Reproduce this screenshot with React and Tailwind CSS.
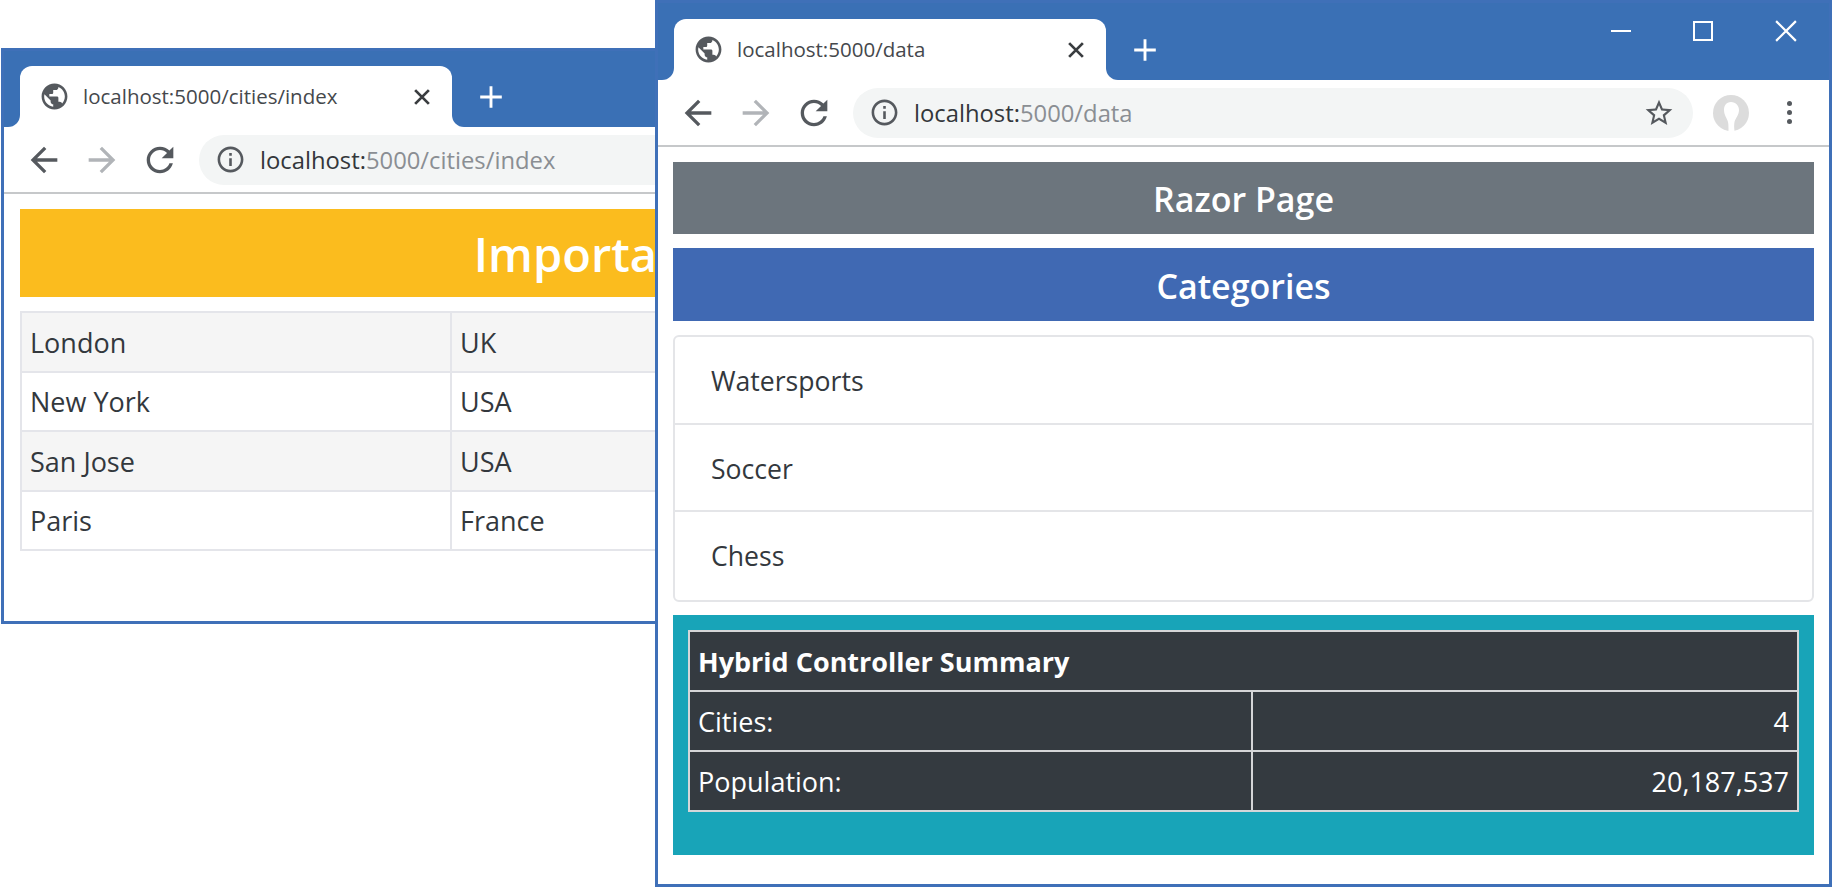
import React from 'react';

const paths = {
  back: 'M20 11H7.83l5.59-5.59L12 4l-8 8 8 8 1.41-1.41L7.83 13H20v-2z',
  forward: 'M12 4l-1.41 1.41L16.17 11H4v2h12.17l-5.58 5.59L12 20l8-8z',
  reload: 'M17.65 6.35C16.2 4.9 14.21 4 12 4c-4.42 0-7.99 3.58-7.99 8s3.57 8 7.99 8c3.73 0 6.84-2.55 7.73-6h-2.08c-.82 2.33-3.04 4-5.65 4-3.31 0-6-2.69-6-6s2.69-6 6-6c1.66 0 3.14.69 4.22 1.78L13 11h7V4l-2.35 2.35z',
  info: 'M11 7h2v2h-2zm0 4h2v6h-2zm1-9C6.48 2 2 6.48 2 12s4.48 10 10 10 10-4.48 10-10S17.52 2 12 2zm0 18c-4.41 0-8-3.59-8-8s3.59-8 8-8 8 3.59 8 8-3.59 8-8 8z',
  star: 'M22 9.24l-7.19-.62L12 2 9.19 8.63 2 9.24l5.46 4.73L5.82 21 12 17.27 18.18 21l-1.63-7.03L22 9.24zM12 15.4l-3.76 2.27 1-4.28-3.32-2.88 4.38-.38L12 6.1l1.71 4.04 4.38.38-3.32 2.88 1 4.28L12 15.4z',
  globe: 'M12 2C6.48 2 2 6.48 2 12s4.48 10 10 10 10-4.48 10-10S17.52 2 12 2zm-1 17.93c-3.95-.49-7-3.85-7-7.93 0-.62.08-1.21.21-1.79L9 15v1c0 1.1.9 2 2 2v1.93zm6.9-2.54c-.26-.81-1-1.39-1.9-1.39h-1v-3c0-.55-.45-1-1-1H8v-2h2c.55 0 1-.45 1-1V7h2c1.1 0 2-.9 2-2v-.41c2.93 1.19 5 4.06 5 7.41 0 2.08-.8 3.97-2.1 5.39z',
};

const Icon = ({ name, className }) => (
  <svg viewBox="0 0 24 24" fill="currentColor" className={className}>
    <path d={paths[name]} />
  </svg>
);

const TabStrip = ({ title, topClass, controls }) => (
  <div className="flex flex-col bg-white">
    <div className={`${topClass} bg-[#3a70b5]`} />
    <div className="flex h-[61px]">
      <div className="w-[16px] bg-[#3a70b5] rounded-br-[12px]" />
      <div className="bg-[#3a70b5]">
        <div className="w-[432px] h-full bg-white rounded-t-[12px] flex items-center pl-[20px] pr-[20px]">
          <Icon name="globe" className="w-[31px] h-[31px] text-[#55595e] -ml-[1px]" />
          <span className="ml-[13px] flex-1 text-[20.5px] text-[#45484c]">{title}</span>
          <svg viewBox="0 0 16 16" className="w-[20px] h-[20px] text-[#3a3d40]" fill="none" stroke="currentColor" strokeWidth="2.2">
            <path d="M2.5 2.5l11 11M13.5 2.5l-11 11" />
          </svg>
        </div>
      </div>
      <div className="flex-1 bg-[#3a70b5] rounded-bl-[12px] flex items-center pl-[27px] relative">
        <svg viewBox="0 0 20 20" className="w-[24px] h-[24px] text-white" fill="none" stroke="currentColor" strokeWidth="2.4">
          <path d="M10 1v18M1 10h18" />
        </svg>
        {controls}
      </div>
    </div>
  </div>
);

const Toolbar = ({ host, path, wide }) => (
  <div className="h-[67px] bg-white border-b-2 border-[#c6c8ca] flex items-center pl-[20px] pr-[37px]">
    <Icon name="back" className="w-[40px] h-[40px] text-[#55595e]" />
    <Icon name="forward" className="w-[40px] h-[40px] text-[#b1b4b8] ml-[18px]" />
    <Icon name="reload" className="w-[40px] h-[40px] text-[#55595e] ml-[18px]" />
    <div className="flex-1 ml-[19px] h-[50px] rounded-full bg-[#f3f5f5] flex items-center pl-[16px] pr-[18px]">
      <Icon name="info" className="w-[31px] h-[31px] text-[#55595e]" />
      <span className="ml-[14px] pt-[2px] flex-1 text-[23.8px] text-[#8a8e93]">
        <span className="text-[#33373b]">{host}</span>{path}
      </span>
      {wide && <Icon name="star" className="w-[32px] h-[32px] text-[#55595e]" />}
    </div>
    {wide && (
      <>
        <svg viewBox="0 0 36 36" className="ml-[20px] w-[36px] h-[36px]">
          <circle cx="18" cy="18" r="18" fill="#dcdcdc" />
          <path d="M18 7c-5 0-7 4-7 8 0 5 3 8 4 12 .5 2 .5 5 .5 9h6c-.5-4-.5-6 0-9 1-4 4.500-7 4.500-12 0-4-3-8-8-8z" fill="#fff" />
        </svg>
        <div className="ml-[38px] flex flex-col gap-[4px]">
          <div className="w-[5px] h-[5px] rounded-full bg-[#55595e]" />
          <div className="w-[5px] h-[5px] rounded-full bg-[#55595e]" />
          <div className="w-[5px] h-[5px] rounded-full bg-[#55595e]" />
        </div>
      </>
    )}
  </div>
);

const cityRows = [
  ['London', 'UK'],
  ['New York', 'USA'],
  ['San Jose', 'USA'],
  ['Paris', 'France'],
];

const categories = ['Watersports', 'Soccer', 'Chess'];

const WindowControls = () => (
  <div className="absolute right-[32px] top-[1px] flex items-center gap-[62px] text-white">
    <svg viewBox="0 0 20 20" className="w-[20px] h-[20px]" fill="none" stroke="currentColor" strokeWidth="2">
      <path d="M0 10h20" />
    </svg>
    <svg viewBox="0 0 20 20" className="w-[20px] h-[20px]" fill="none" stroke="currentColor" strokeWidth="2">
      <rect x="1" y="1" width="18" height="18" />
    </svg>
    <svg viewBox="0 0 20 20" className="w-[22px] h-[22px]" fill="none" stroke="currentColor" strokeWidth="2">
      <path d="M1 1l18 18M19 1L1 19" />
    </svg>
  </div>
);

export default function App() {
  return (
    <div className="relative w-[1833px] h-[889px] bg-white overflow-hidden font-['Open_Sans',sans-serif]">
      {/* back window */}
      <div className="absolute left-[1px] top-[48px] w-[1314px] h-[576px] border-[3px] border-[#3f70b8] bg-white">
        <TabStrip title="localhost:5000/cities/index" topClass="h-[15px]" />
        <Toolbar host="localhost:" path="5000/cities/index" />
        <div className="px-[16px] pt-[15px]">
          <div className="h-[88px] pt-[2px] bg-[#fbbc1e] flex items-center justify-center text-white text-[47px] font-semibold">
            Important Cities
          </div>
          <table className="mt-[14px] w-full table-fixed border-collapse text-[27px] text-[#33383d]">
            <tbody>
              {cityRows.map(([city, country], i) => (
                <tr key={city} className={`h-[59.6px] ${i % 2 === 0 ? 'bg-[#f5f5f5]' : 'bg-white'}`}>
                  <td className="w-[430px] border-2 border-[#e4e5ea] px-[8px] pt-[2px]">{city}</td>
                  <td className="border-2 border-[#e4e5ea] px-[8px] pt-[2px]">{country}</td>
                </tr>
              ))}
            </tbody>
          </table>
        </div>
      </div>

      {/* front window */}
      <div className="absolute left-[655px] top-0 w-[1177px] h-[887px] border-[3px] border-[#3f70b8] bg-white">
        <TabStrip title="localhost:5000/data" topClass="h-[16px]" controls={<WindowControls />} />
        <Toolbar host="localhost:" path="5000/data" wide />
        <div className="px-[15px] pt-[15px] flex flex-col">
          <div className="h-[72px] pt-[2px] bg-[#6c757d] flex items-center justify-center text-white text-[34px] font-semibold">
            Razor Page
          </div>
          <div className="mt-[14px] h-[73px] pt-[3px] bg-[#4069b3] flex items-center justify-center text-white text-[34px] font-semibold">
            Categories
          </div>
          <ul className="mt-[14px] pb-[3px] border-2 border-[#e4e5e8] rounded-[6px] text-[26.6px] text-[#33383d]">
            {categories.map((c, i) => (
              <li key={c} className={`flex items-center pl-[36px] ${i > 0 ? 'h-[87px] pt-[5px] border-t-2 border-[#e4e5e8]' : 'h-[86px] pt-[3px]'}`}>
                {c}
              </li>
            ))}
          </ul>
          <div className="mt-[13px] h-[240px] bg-[#18a4b8] px-[15px] pt-[15px]">
            <table className="w-full table-fixed border-collapse bg-[#343a40] text-white text-[27px]">
              <colgroup>
                <col className="w-[563px]" />
                <col />
              </colgroup>
              <tbody>
                <tr className="h-[60px]">
                  <th colSpan="2" className="border-2 border-[#d5d6d8] px-[8px] pt-[2px] text-left font-bold">Hybrid Controller Summary</th>
                </tr>
                <tr className="h-[60px]">
                  <td className="border-2 border-[#d5d6d8] px-[8px] pt-[2px]">Cities:</td>
                  <td className="border-2 border-[#d5d6d8] px-[8px] pt-[2px] text-right">4</td>
                </tr>
                <tr className="h-[60px]">
                  <td className="border-2 border-[#d5d6d8] px-[8px] pt-[2px]">Population:</td>
                  <td className="border-2 border-[#d5d6d8] px-[8px] pt-[2px] text-right">20,187,537</td>
                </tr>
              </tbody>
            </table>
          </div>
        </div>
      </div>
    </div>
  );
}
